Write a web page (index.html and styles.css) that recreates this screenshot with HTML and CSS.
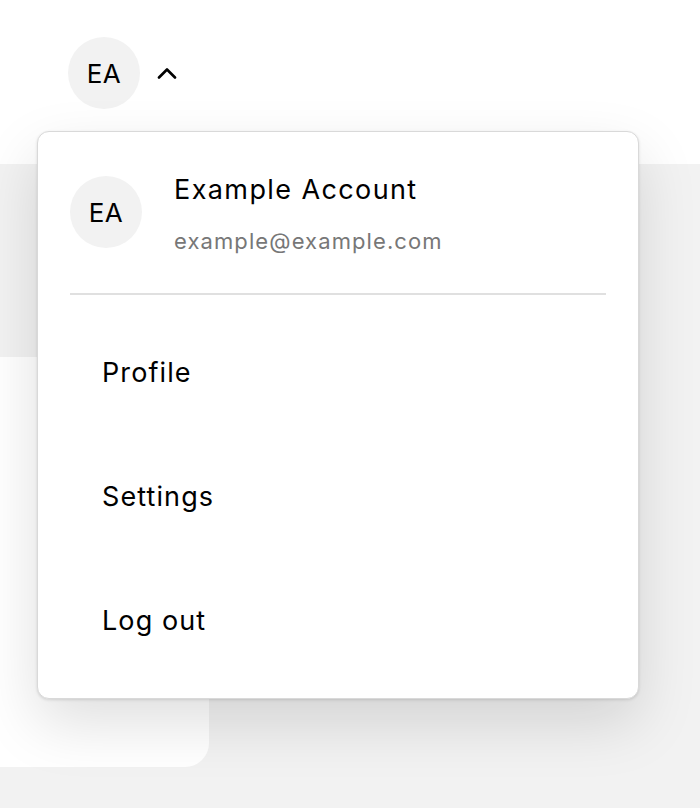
FILE: index.html
```html
<!DOCTYPE html>
<html lang="en">
<head>
  <meta charset="UTF-8" />
  <meta name="viewport" content="width=device-width, initial-scale=1.0"/>
  <title>Account menu</title>
  <link rel="stylesheet" href="styles.css">
</head>
<body>

  <header class="topbar">
    <button class="account-toggle" aria-expanded="true">
      <span class="avatar">EA</span>
      <svg class="chevron" width="22" height="12" viewBox="0 0 22 12">
        <polyline points="3,10.5 11,2.5 19,10.5" fill="none" stroke="#000" stroke-width="2.6" stroke-linecap="round" stroke-linejoin="round"/>
      </svg>
    </button>
  </header>

  <main class="content">
    <div class="side-card"></div>
  </main>

  <div class="account-menu">
    <div class="account-info">
      <span class="avatar">EA</span>
      <div class="account-text">
        <div class="account-name">Example Account</div>
        <div class="account-email">example@example.com</div>
      </div>
    </div>
    <hr class="divider">
    <ul class="menu-list">
      <li><a href="#">Profile</a></li>
      <li><a href="#">Settings</a></li>
      <li><a href="#">Log out</a></li>
    </ul>
  </div>

</body>
</html>
```

FILE: styles.css
```css
body {
  margin: 0;
  font-family: 'Inter', 'Open Sans', sans-serif;
  background-color: #f2f2f2;
  color: #000;
  height: 808px;
  overflow: hidden;
  position: relative;
}

.topbar {
  background: white;
  height: 164px;
  box-sizing: border-box;
  padding: 37px 0 0 68px;
}

.account-toggle {
  display: flex;
  align-items: center;
  gap: 16px;
  background: none;
  border: none;
  padding: 0;
  font: inherit;
  cursor: pointer;
}

.avatar {
  width: 72px;
  height: 72px;
  border-radius: 50%;
  background-color: #f2f2f2;
  color: #000;
  display: flex;
  align-items: center;
  justify-content: center;
  font-size: 26px;
  letter-spacing: 0.5px;
  flex-shrink: 0;
}

.chevron {
  display: block;
}

.content {
  padding-top: 193px;
}

.side-card {
  width: 209px;
  height: 410px;
  background: white;
  border-bottom-right-radius: 24px;
}

.account-menu {
  position: absolute;
  left: 37px;
  top: 131px;
  width: 602px;
  height: 568px;
  box-sizing: border-box;
  background: white;
  border: 1px solid #d9d9d9;
  border-radius: 12px;
  box-shadow: 0 1px 3px rgba(0,0,0,0.12), 0 24px 60px rgba(0,0,0,0.13);
  padding: 44px 32px 0;
}

.account-info {
  display: flex;
  gap: 32px;
}

.account-name {
  font-size: 27px;
  line-height: 28px;
  letter-spacing: 1.4px;
}

.account-email {
  font-size: 22px;
  line-height: 28px;
  letter-spacing: 1.1px;
  color: #777;
  margin-top: 23px;
}

.divider {
  border: none;
  border-top: 2px solid #e0e0e0;
  margin: 38px 0 0;
}

.menu-list {
  list-style: none;
  margin: 15px 0 0;
  padding: 0;
}

.menu-list a {
  display: flex;
  align-items: center;
  height: 124px;
  padding-left: 32px;
  font-size: 27px;
  letter-spacing: 1.1px;
  color: #000;
  text-decoration: none;
}
```
